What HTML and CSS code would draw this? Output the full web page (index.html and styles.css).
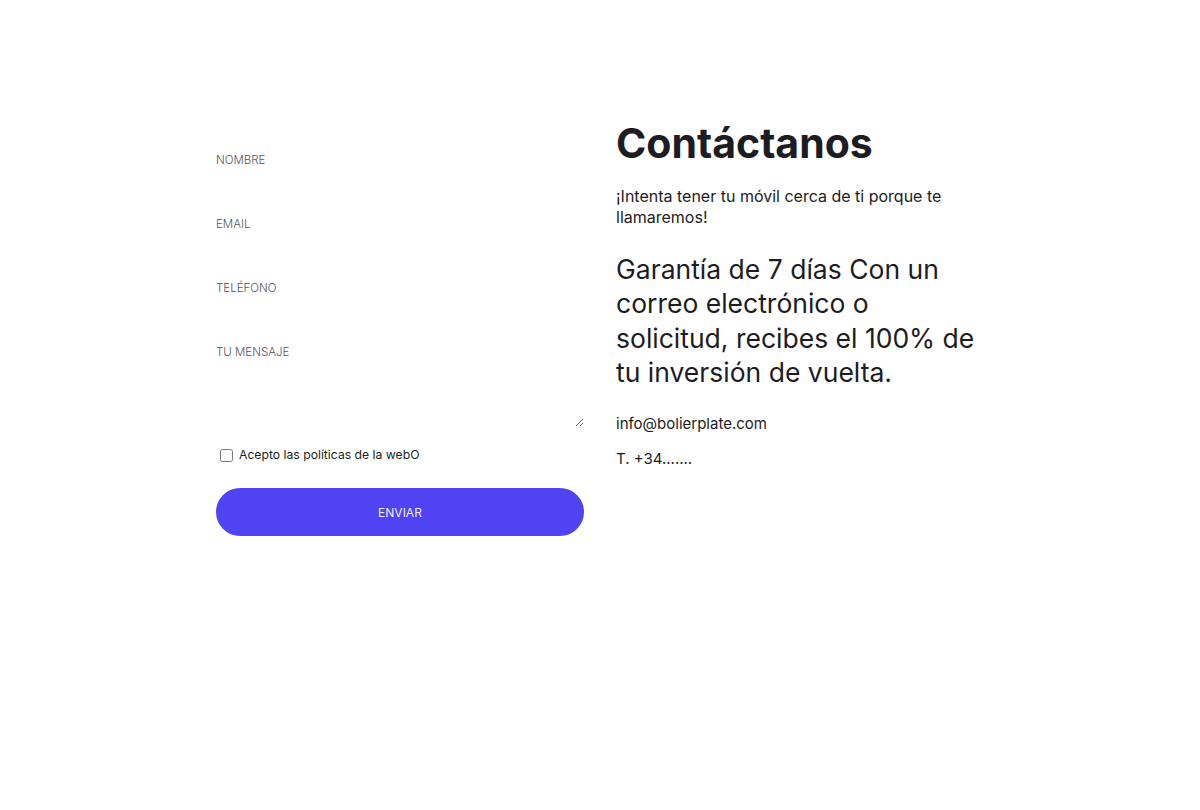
FILE: index.html
```html
<!DOCTYPE html>
<html lang="es">
<head>
<meta charset="utf-8">
<title>Contáctanos</title>
<link rel="stylesheet" href="styles.css">
</head>
<body>
<main class="contact">
  <form class="form">
    <div class="field">
      <label class="label" for="nombre">NOMBRE</label>
      <input class="input" id="nombre" type="text">
    </div>
    <div class="field">
      <label class="label" for="email">EMAIL</label>
      <input class="input" id="email" type="email">
    </div>
    <div class="field">
      <label class="label" for="tel">TELÉFONO</label>
      <input class="input" id="tel" type="tel">
    </div>
    <div class="field field-msg">
      <label class="label" for="msg">TU MENSAJE</label>
      <textarea class="textarea" id="msg"></textarea>
    </div>
    <label class="check">
      <input type="checkbox" class="checkbox">
      <span>Acepto las políticas de la webO</span>
    </label>
    <button type="button" class="btn">ENVIAR</button>
  </form>
  <section class="info">
    <h1 class="title">Contáctanos</h1>
    <p class="lead">¡Intenta tener tu móvil cerca de ti porque te llamaremos!</p>
    <p class="big">Garantía de 7 días Con un correo electrónico o solicitud, recibes el 100% de tu inversión de vuelta.</p>
    <p class="line">info@bolierplate.com</p>
    <p class="line">T. +34.......</p>
  </section>
</main>
</body>
</html>
```

FILE: styles.css
```css
* { box-sizing: border-box; }
html, body { margin: 0; padding: 0; background: #fff; }
body {
  font-family: Inter, "Noto Sans", "Liberation Sans", sans-serif;
  color: #1c1c22;
}
.contact {
  width: 768px;
  margin: 0 auto;
  padding-top: 116px;
  display: grid;
  grid-template-columns: 368px 368px;
  column-gap: 32px;
}
.form {
  display: flex;
  flex-direction: column;
  padding-top: 35px;
}
.field {
  display: flex;
  flex-direction: column;
  height: 64px;
}
.label {
  font-size: 11.5px;
  line-height: 18px;
  color: #55555b;
  font-weight: 300;
}
.input {
  border: none;
  outline: none;
  height: 30px;
  padding: 0;
  background: transparent;
  font: inherit;
}
.field-msg { height: auto; }
.textarea {
  border: none;
  outline: none;
  height: 66px;
  padding: 0;
  resize: vertical;
  font: inherit;
  background: transparent;
}
.check {
  display: flex;
  align-items: center;
  gap: 6px;
  margin-top: 19px;
  padding-left: 4px;
  font-size: 12.2px;
  line-height: 18px;
  color: #1c1c22;
}
.checkbox { margin: 0; width: 13px; height: 13px; }
.btn {
  margin-top: 24px;
  height: 48px;
  border: none;
  border-radius: 24px;
  background: #4f43f4;
  color: #ecebff;
  font: inherit;
  font-size: 12px;
  font-weight: 400;
}
.info { display: flex; flex-direction: column; }
.title {
  margin: 0;
  font-size: 41px;
  line-height: 54px;
  font-weight: 700;
  color: #1c1c22;
}
.lead {
  margin: 16px 0 0;
  font-size: 16px;
  line-height: 21px;
}
.big {
  margin: 24px 0 0;
  font-size: 26.5px;
  line-height: 34.3px;
}
.line {
  margin: 26px 0 0;
  font-size: 15px;
  line-height: 18px;
}
.line + .line { margin-top: 17px; }
```
